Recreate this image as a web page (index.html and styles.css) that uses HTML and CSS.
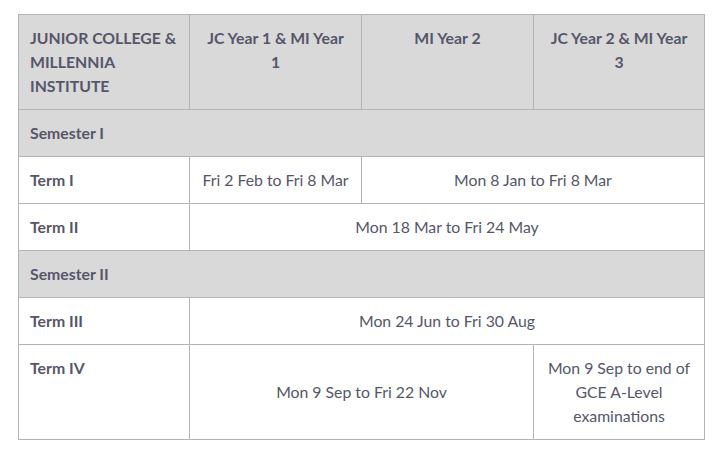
FILE: index.html
```html
<!DOCTYPE html>
<html>
<head>
<meta charset="utf-8">
<link rel="stylesheet" href="styles.css">
</head>
<body>
<table class="terms">
  <colgroup>
    <col class="c1"><col class="c2"><col class="c2"><col class="c1">
  </colgroup>
  <tr class="head">
    <th class="left">JUNIOR COLLEGE &amp; MILLENNIA INSTITUTE</th>
    <th>JC Year 1 &amp; MI Year 1</th>
    <th>MI Year 2</th>
    <th>JC Year 2 &amp; MI Year 3</th>
  </tr>
  <tr class="sem">
    <th class="left" colspan="4">Semester I</th>
  </tr>
  <tr>
    <th class="left">Term I</th>
    <td>Fri 2 Feb to Fri 8 Mar</td>
    <td colspan="2">Mon 8 Jan to Fri 8 Mar</td>
  </tr>
  <tr>
    <th class="left">Term II</th>
    <td colspan="3">Mon 18 Mar to Fri 24 May</td>
  </tr>
  <tr class="sem">
    <th class="left" colspan="4">Semester II</th>
  </tr>
  <tr>
    <th class="left">Term III</th>
    <td colspan="3">Mon 24 Jun to Fri 30 Aug</td>
  </tr>
  <tr>
    <th class="left">Term IV</th>
    <td colspan="2">Mon 9 Sep to Fri 22 Nov</td>
    <td>Mon 9 Sep to end of GCE A-Level examinations</td>
  </tr>
</table>
</body>
</html>
```
FILE: styles.css
```css
html, body {
  margin: 0;
  padding: 0;
  background: #ffffff;
}
body {
  padding: 14px 18px;
  font-family: Lato, "Open Sans", sans-serif;
  font-size: 15.8px;
  color: #56566a;
}
.terms {
  border-collapse: collapse;
  table-layout: fixed;
  width: 686px;
}
.c1 { width: 171px; }
.c2 { width: 172px; }
.terms th, .terms td {
  border: 1px solid #b3b3b3;
  padding: 11px 11px;
  line-height: 24px;
  vertical-align: top;
  text-align: center;
}
.terms th { font-weight: 700; }
.terms td { font-weight: 400; vertical-align: middle; }
.terms th.left { text-align: left; }
.head th, .sem th {
  background: #d9d9d9;
}
```
